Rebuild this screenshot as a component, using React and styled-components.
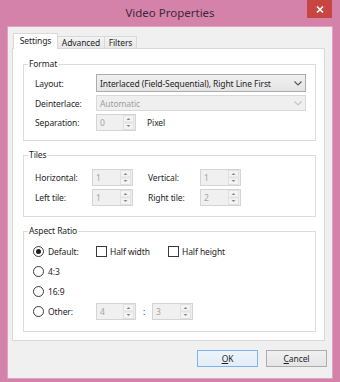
import React from 'react'
import styled, { createGlobalStyle } from 'styled-components'

const GlobalStyle = createGlobalStyle`
  html, body { margin:0; padding:0; }
  body {
    background:#d582ab;
    font-family:"Noto Sans", "Open Sans", sans-serif;
    font-size:8.5px;
    letter-spacing:-0.1px;
    color:#1e1e1e;
  }
`

const Spinner = ({ value, w = 41 }) => (
  <Spin $w={w}>
    <SpinText>{value}</SpinText>
    <SpinButtons>
      <svg width="11" height="15" viewBox="0 0 11 15">
        <rect x="0.5" y="0.5" width="10" height="6.5" fill="#f4f4f4" stroke="#e0e0e0" />
        <rect x="0.5" y="8" width="10" height="6.5" fill="#f4f4f4" stroke="#e0e0e0" />
        <path d="M3.5 5 L5.5 3 L7.5 5 Z" fill="#8a8a8a" />
        <path d="M3.5 10 L5.5 12 L7.5 10 Z" fill="#8a8a8a" />
      </svg>
    </SpinButtons>
  </Spin>
)

const Combo = ({ children, disabled }) => (
  <ComboBox $disabled={disabled}>
    <span>{children}</span>
    <svg width="8" height="5" viewBox="0 0 8 5">
      <path d="M0.5 0.5 L4 4 L7.5 0.5" fill="none" stroke={disabled ? '#c4c4c4' : '#555'} strokeWidth="1.1" />
    </svg>
  </ComboBox>
)

const Radio = ({ checked, label }) => (
  <RadioOpt>
    <RadioDot $checked={checked} />
    {label}
  </RadioOpt>
)

const Check = ({ label }) => (
  <CheckOpt>
    <CheckBox />
    {label}
  </CheckOpt>
)

const App = () => {
  return (
    <>
      <GlobalStyle />
      <Window>
        <TitleBar>
          <Title>Video Properties</Title>
          <CloseButton>
            <svg width="8" height="7" viewBox="0 0 8 7">
              <path d="M1 0.5 L7 6.5 M7 0.5 L1 6.5" stroke="#ffffff" strokeWidth="1.6" />
            </svg>
          </CloseButton>
        </TitleBar>
        <Client>
          <Tabs>
            <Tab $active $w={45}>Settings</Tab>
            <Tab $w={48}>Advanced</Tab>
            <Tab $w={33}>Filters</Tab>
          </Tabs>
          <Panel>
            <Group>
              <Legend>Format</Legend>
              <FormGrid>
                <Label>Layout:</Label>
                <Combo>Interlaced (Field-Sequential), Right Line First</Combo>
                <Label>Deinterlace:</Label>
                <Combo disabled>Automatic</Combo>
                <Label>Separation:</Label>
                <Inline>
                  <Spinner value="0" w={40} />
                  <span>Pixel</span>
                </Inline>
              </FormGrid>
            </Group>

            <Group $top={8} $bottom={10}>
              <Legend>Tiles</Legend>
              <TileGrid>
                <Label>Horizontal:</Label>
                <Spinner value="1" />
                <Label>Vertical:</Label>
                <Spinner value="1" />
                <Label>Left tile:</Label>
                <Spinner value="1" />
                <Label>Right tile:</Label>
                <Spinner value="2" />
              </TileGrid>
            </Group>

            <Group $top={6} $bottom={11}>
              <Legend>Aspect Ratio</Legend>
              <Rows>
                <Row>
                  <Radio checked label="Default:" />
                  <Check label="Half width" />
                  <Check label="Half height" />
                </Row>
                <Row>
                  <Radio label="4:3" />
                </Row>
                <Row>
                  <Radio label="16:9" />
                </Row>
                <Row>
                  <Radio label="Other:" />
                  <Spinner value="4" w={40} />
                  <Colon>:</Colon>
                  <Spinner value="3" w={41} />
                </Row>
              </Rows>
            </Group>
          </Panel>
          <ButtonRow>
            <Button $default>
              <u>O</u>K
            </Button>
            <Button>
              <u>C</u>ancel
            </Button>
          </ButtonRow>
        </Client>
      </Window>
    </>
  )
}

const Window = styled.div`
  width:340px;
  height:382px;
  box-sizing:border-box;
  display:flex;
  flex-direction:column;
  padding:0 8px 4px 8px;
  background:#d582ab;
`

const TitleBar = styled.div`
  height:27px;
  display:flex;
  align-items:flex-start;
`

const Title = styled.div`
  flex:1;
  text-align:center;
  font-size:11.5px;
  letter-spacing:0;
  line-height:14px;
  padding-top:6px;
  padding-left:25px;
  color:#3b2a35;
`

const CloseButton = styled.span`
  display:flex;
  align-items:center;
  justify-content:center;
  width:25px;
  height:18px;
  flex-shrink:0;
  background:rgb(199, 70, 66);
`

const Client = styled.div`
  flex:1;
  background:#f0f0f0;
  box-shadow:0 0 0 1px #e3a2c2;
  padding:6px 7px 0 4px;
  display:flex;
  flex-direction:column;
`

const Tabs = styled.div`
  display:flex;
  align-items:flex-end;
  height:16px;
  padding-left:1px;
  margin-bottom:-1px;
  position:relative;
  z-index:1;
`

const Tab = styled.div`
  box-sizing:border-box;
  width:${p => p.$w}px;
  height:${p => (p.$active ? 16 : 13)}px;
  border:1px solid #d9d9d9;
  border-bottom:${p => (p.$active ? 'none' : '1px solid #d9d9d9')};
  margin-left:${p => (p.$active ? 0 : -1)}px;
  background:${p => (p.$active ? '#fff' : 'linear-gradient(#f3f3f3, #e8e8e8)')};
  text-align:center;
  line-height:${p => (p.$active ? 14 : 11)}px;
`

const Panel = styled.div`
  box-sizing:border-box;
  height:293px;
  border:1px solid #d9d9d9;
  background:#fff;
  padding:9px 8px 0 10px;
  display:flex;
  flex-direction:column;
  gap:8px;
`

const Group = styled.fieldset`
  margin:0;
  border:1px solid #dcdcdc;
  padding:${p => p.$top ?? 4}px 9px ${p => p.$bottom ?? 9}px 11px;
  min-width:0;
`

const Legend = styled.legend`
  padding:0 1px;
  margin-left:-7px;
  line-height:12px;
`

const Label = styled.span`
  white-space:nowrap;
`

const FormGrid = styled.div`
  display:grid;
  grid-template-columns:61px 1fr;
  row-gap:3px;
  align-items:center;
`

const TileGrid = styled.div`
  display:grid;
  grid-template-columns:57px 41px 67px 41px;
  row-gap:3px;
  align-items:center;
  & > :nth-child(4n+3) { padding-left:15px; }
`

const ComboBox = styled.div`
  box-sizing:border-box;
  height:${p => (p.$disabled ? 16 : 18)}px;
  border:1px solid ${p => (p.$disabled ? '#d9d9d9' : '#acacac')};
  background:${p => (p.$disabled ? '#efefef' : 'linear-gradient(#f0f0f0, #e5e5e5)')};
  color:${p => (p.$disabled ? '#a0a0a0' : '#1e1e1e')};
  display:flex;
  align-items:center;
  justify-content:space-between;
  padding:0 3px 0 3px;
  white-space:nowrap;
`

const Inline = styled.div`
  display:flex;
  align-items:center;
  gap:11px;
`

const Spin = styled.div`
  box-sizing:border-box;
  width:${p => p.$w}px;
  height:17px;
  border:1px solid #d4d4d4;
  background:#f0f0f0;
  display:flex;
  align-items:center;
`

const SpinText = styled.span`
  flex:1;
  padding-left:3px;
  color:#a3a3a3;
`

const SpinButtons = styled.span`
  display:flex;
  margin-right:1px;
`

const Rows = styled.div`
  display:flex;
  flex-direction:column;
  gap:3px;
`

const Row = styled.div`
  display:flex;
  align-items:center;
  height:17px;
`

const RadioOpt = styled.label`
  width:63px;
  margin-left:-2px;
  display:flex;
  align-items:center;
  gap:4px;
`

const RadioDot = styled.span`
  box-sizing:border-box;
  width:11px;
  height:11px;
  border-radius:50%;
  border:1px solid #3a3a3a;
  background:#fff;
  display:flex;
  align-items:center;
  justify-content:center;
  &::after {
    content:"";
    width:5px;
    height:5px;
    border-radius:50%;
    background:${p => (p.$checked ? '#1e1e1e' : 'transparent')};
  }
`

const CheckOpt = styled.label`
  width:72px;
  display:flex;
  align-items:center;
  gap:3px;
`

const CheckBox = styled.span`
  box-sizing:border-box;
  width:11px;
  height:11px;
  border:1px solid #3a3a3a;
  background:#fff;
`

const Colon = styled.span`
  width:16px;
  text-align:center;
`

const ButtonRow = styled.div`
  display:flex;
  justify-content:flex-end;
  gap:8px;
  margin-top:9px;
  margin-right:-2px;
`

const Button = styled.div`
  box-sizing:border-box;
  width:61px;
  height:17px;
  border:1px solid ${p => (p.$default ? '#7eb4ea' : '#acacac')};
  background:${p => (p.$default ? 'linear-gradient(#edf4fb, #e3edf7)' : 'linear-gradient(#f0f0f0, #e5e5e5)')};
  display:flex;
  align-items:center;
  justify-content:center;
  u { text-decoration:underline; }
`

export default App
